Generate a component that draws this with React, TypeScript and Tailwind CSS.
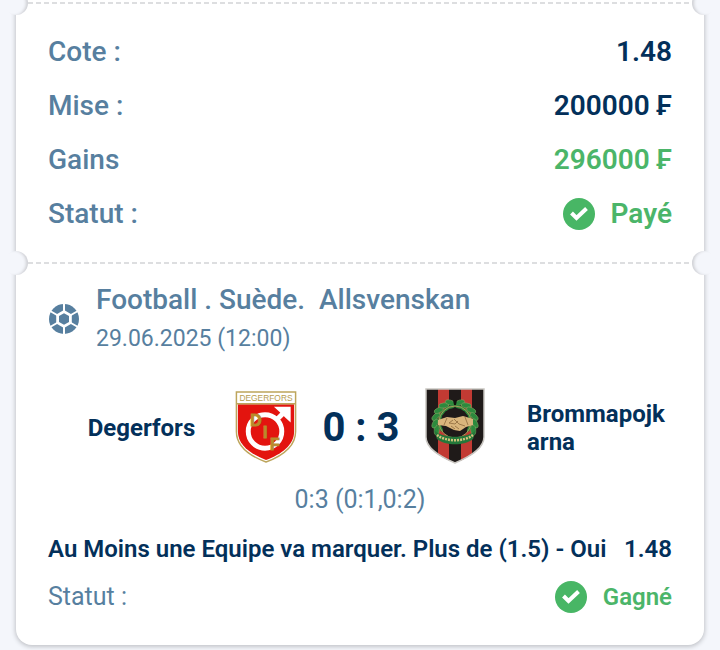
import { clsx } from "clsx"

const summary = [
    { label: "Cote :", value: "1.48", tone: "text-[#03305a]" },
    { label: "Mise :", value: "200000 ₣", tone: "text-[#03305a]" },
    { label: "Gains", value: "296000 ₣", tone: "text-[#4bb569]" },
]

// wreath leaves, clockwise degrees from the top; the bottom is left for the ribbon
const leaves = [14, 34, 54, 74, 94, 114, 246, 266, 286, 306, 326, 346]

function Divider() {
    return (
        <div className="relative h-[2px]">
            <div className="mx-3 h-full bg-[repeating-linear-gradient(90deg,#dddee0_0_5px,transparent_5px_8px)]" />
            <span className="absolute -left-3 -top-[11px] h-6 w-6 rounded-full bg-[#f4f6fb] shadow-[inset_-3px_0_3px_-1px_#cfd0d4]" />
            <span className="absolute -right-3 -top-[11px] h-6 w-6 rounded-full bg-[#f4f6fb] shadow-[inset_3px_0_3px_-1px_#cfd0d4]" />
        </div>
    )
}

function CheckBadge() {
    return (
        <svg className="h-8 w-8 shrink-0" viewBox="0 0 32 32" aria-hidden="true">
            <circle cx="16" cy="16" r="16" fill="#48b665" />
            <path d="M8.500 15l5 5 10-9.500" fill="none" stroke="#fff" strokeWidth="4" />
        </svg>
    )
}

function BallIcon() {
    return (
        <svg className="h-8 w-8 shrink-0" viewBox="0 0 32 32" aria-hidden="true">
            <circle cx="16" cy="16" r="15" fill="#577f9f" />
            <path d="M16 0v32M2.100 8l27.800 16M2.100 24l27.800-16" stroke="#fff" strokeWidth="2" />
            <path d="M16 7l7.800 4.500v9L16 25l-7.800-4.500v-9z" fill="#fff" />
            <path d="M16 10.200l5 2.900v5.800l-5 2.900-5-2.900v-5.800z" fill="#577f9f" />
        </svg>
    )
}

function DegerforsCrest() {
    return (
        <svg className="mb-1 h-[73px] w-[62px] shrink-0" viewBox="0 0 62 74" role="img" aria-label="Degerfors IF">
            <path d="M1 2h60v40c0 16-14 25-30 31C15 67 1 58 1 42z" fill="#fff" stroke="#bda55c" strokeWidth="1.5" />
            <path d="M2.500 14.500h57V42c0 14-13 23-28.500 29C16 65 2.500 56 2.500 42z" fill="#e3140f" />
            <path d="M1 14h60" stroke="#bda55c" strokeWidth="1.500" />
            <text x="31" y="11.500" textAnchor="middle" fontSize="8.500" fontWeight="500" fill="#b59c52" className="font-['Liberation_Sans',sans-serif]">DEGERFORS</text>
            <circle cx="30" cy="42" r="17" fill="none" stroke="#fff" strokeWidth="5" />
            <path d="M41 31l9-9" stroke="#fff" strokeWidth="5" />
            <path d="M39 17h17v16l-5-4.500-7-7z" fill="#fff" />
            <g fill="#b98b2c" stroke="#b98b2c" strokeWidth="1" fontSize="16" fontWeight="700" className="font-['Liberation_Sans',sans-serif]">
                <text x="15" y="36">D</text>
                <text x="28" y="49">I</text>
                <text x="35" y="61">F</text>
            </g>
        </svg>
    )
}

function BrommapojkarnaCrest() {
    return (
        <svg className="mb-1 h-[76px] w-[60px] shrink-0" viewBox="0 0 60 76" role="img" aria-label="Brommapojkarna">
            <defs>
                <clipPath id="bp-shield">
                    <path d="M1 1h58v48c0 12-15 20-29 26C16 69 1 61 1 49z" />
                </clipPath>
            </defs>
            <g clipPath="url(#bp-shield)">
                <path d="M0 0h60v76H0z" fill="#1f1a19" />
                <path d="M13 0h11v76H13zM36 0h11v76H36z" fill="#c23a33" />
                <circle cx="30" cy="34" r="16" fill="#1f1a19" />
            </g>
            {leaves.map((angle) => (
                <g key={angle} transform={`rotate(${angle} 30 34)`}>
                    <ellipse cx="30" cy="14" rx="5" ry="2.500" transform={`rotate(${angle < 180 ? -28 : 28} 30 14)`} fill="#2c8a3d" stroke="#8aa866" strokeWidth="0.500" />
                    <ellipse cx="30" cy="18.500" rx="4" ry="1.500" fill="#2c8a3d" />
                </g>
            ))}
            <circle cx="30" cy="34" r="16" fill="none" stroke="#a99b58" strokeWidth="1" />
            <path d="M9 42c7 9 35 9 42 0l-3 9c-8 7-28 7-36 0z" fill="#24783a" />
            <path d="M12 47c9 7 27 7 36 0" fill="none" stroke="#d1c27c" strokeWidth="2.500" strokeDasharray="2 1" />
            <path d="M13 32l9-3 8 1 8-2 10 3v6l-7 2-6 4-6-1-8-4-8-1z" fill="#d9b57c" />
            <path d="M22 30l-3 7M29 31l5 5 6 2M28 32l-4 3 6 1 3-3M30 41l-4-3M34 41l-4-3M40 29l3 8" fill="none" stroke="#8d6a3d" strokeWidth="0.800" />
            <path d="M28 12h4l-1 5h-2z" fill="#11120e" />
            <path d="M1 1h58v48c0 12-15 20-29 26C16 69 1 61 1 49z" fill="none" stroke="#c9c6c1" strokeWidth="1.500" />
        </svg>
    )
}

function Status({ text }: { text: string }) {
    return (
        <span className="flex items-center gap-4 font-semibold text-[#4bb569]">
            <CheckBadge />
            {text}
        </span>
    )
}

export default function App() {
    return (
        <main className="min-h-screen bg-[#f4f6fb] px-4 font-['Roboto',sans-serif]">
            <article className="rounded-b-2xl bg-white pt-[2px] shadow-[0_1px_4px_1px_#c3c5ca]">
                <Divider />
                <dl className="px-8 pb-[21px] pt-[21px] text-[28px] leading-[54px]">
                    {summary.map((row) => (
                        <div key={row.label} className="flex justify-between">
                            <dt className="font-medium text-[#577f9f]">{row.label}</dt>
                            <dd className={clsx("font-semibold", row.tone)}>{row.value}</dd>
                        </div>
                    ))}
                    <div className="flex justify-between">
                        <dt className="font-medium text-[#577f9f]">Statut :</dt>
                        <dd>
                            <Status text="Payé" />
                        </dd>
                    </div>
                </dl>
                <Divider />
                <section className="px-8 pb-7 pt-4">
                    <header className="flex items-center gap-4 text-[#577f9f]">
                        <BallIcon />
                        <div>
                            <h2 className="whitespace-pre text-[28px] leading-10 font-medium">{"Football . Suède.  Allsvenskan"}</h2>
                            <p className="text-[23px] leading-[38px]">29.06.2025 (12:00)</p>
                        </div>
                    </header>
                    <div className="mt-[26px] flex min-h-22 items-center text-2xl leading-7 font-bold text-[#03305a]">
                        <p className="min-w-0 flex-1 text-center">Degerfors</p>
                        <DegerforsCrest />
                        <p className="w-32 text-center text-[40px]">0 : 3</p>
                        <BrommapojkarnaCrest />
                        <div className="min-w-0 flex-1">
                            <p className="ml-[42px] break-all">Brommapojkarna</p>
                        </div>
                    </div>
                    <p className="mt-2 text-center text-[25px] leading-10 text-[#577f9f]">0:3 (0:1,0:2)</p>
                    <div className="mt-[9px] flex justify-between text-2xl leading-10 font-semibold text-[#03305a]">
                        <p>Au Moins une Equipe va marquer. Plus de (1.5) - Oui</p>
                        <p>1.48</p>
                    </div>
                    <div className="mt-2 flex justify-between text-2xl leading-10">
                        <p className="text-[25px] text-[#577f9f]">Statut :</p>
                        <Status text="Gagné" />
                    </div>
                </section>
            </article>
        </main>
    )
}
